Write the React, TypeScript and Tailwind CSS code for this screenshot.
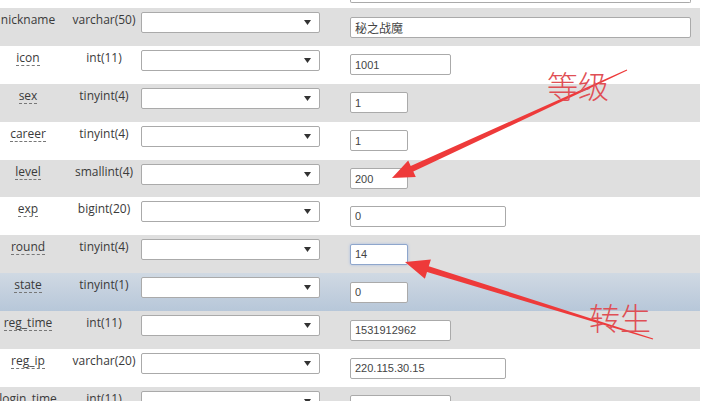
import React from 'react';

interface Field {
  name: string;
  type: string;
  value: string;
  width: string;
  bg: string;
  focused?: boolean;
  plain?: boolean;
}

const fields: Field[] = [
  { name: 'nickname', type: 'varchar(50)', value: '秘之战魔', width: 'w-[341px]', bg: 'bg-[#dfdfdf]', plain: true },
  { name: 'icon', type: 'int(11)', value: '1001', width: 'w-[101px]', bg: 'bg-white' },
  { name: 'sex', type: 'tinyint(4)', value: '1', width: 'w-[58px]', bg: 'bg-[#dfdfdf]' },
  { name: 'career', type: 'tinyint(4)', value: '1', width: 'w-[58px]', bg: 'bg-white' },
  { name: 'level', type: 'smallint(4)', value: '200', width: 'w-[58px]', bg: 'bg-[#dfdfdf]' },
  { name: 'exp', type: 'bigint(20)', value: '0', width: 'w-[156px]', bg: 'bg-white' },
  { name: 'round', type: 'tinyint(4)', value: '14', width: 'w-[58px]', bg: 'bg-[#dfdfdf]', focused: true },
  { name: 'state', type: 'tinyint(1)', value: '0', width: 'w-[58px]', bg: 'bg-gradient-to-b from-[#d0d9e3] to-[#b7c7d9]' },
  { name: 'reg_time', type: 'int(11)', value: '1531912962', width: 'w-[101px]', bg: 'bg-[#dfdfdf]' },
  { name: 'reg_ip', type: 'varchar(20)', value: '220.115.30.15', width: 'w-[156px]', bg: 'bg-white' },
  { name: 'login_time', type: 'int(11)', value: '1532060210', width: 'w-[101px]', bg: 'bg-[#dfdfdf]' },
];

const SelectBox = () => (
  <div className="mt-[4px] ml-[1px] w-[179px] h-[21px] bg-white border border-[#aaa] rounded-[2px] flex items-center justify-end pr-[8px]">
    <svg width="7" height="5" viewBox="0 0 7 5">
      <path d="M0 0 L7 0 L3.5 5 Z" fill="#333" />
    </svg>
  </div>
);

const FieldRow = ({ field }: { field: Field }) => (
  <div className={`flex items-start h-[37.9px] w-[700px] ${field.bg}`}>
    <div className="w-[56px] shrink-0 pt-[5px] flex justify-center whitespace-nowrap">
      <span
        className={`inline-block leading-[14px] text-[12px] text-[#3a3a3a] ${
          field.plain ? '' : 'border-b border-dashed border-[#777]'
        }`}
      >
        {field.name}
      </span>
    </div>
    <div className="w-[72px] ml-[12px] shrink-0 pt-[5px] text-center leading-[14px] text-[12px] text-[#3a3a3a] whitespace-nowrap">
      {field.type}
    </div>
    <SelectBox />
    <input
      readOnly
      defaultValue={field.value}
      className={`mt-[8.5px] ml-[30px] h-[21px] ${field.width} bg-white rounded-[2px] px-[4px] text-[11px] text-[#444] outline-none ${
        field.focused
          ? 'border border-[#8ea6cc] shadow-[0_0_3px_#a9bde0]'
          : 'border border-[#aaa]'
      } ${field.name === 'nickname' ? 'text-[12px]' : ''}`}
      style={{ fontFamily: '"Liberation Sans", "Noto Sans CJK SC", sans-serif' }}
    />
  </div>
);

const Annotations = () => (
  <>
    <svg className="absolute left-0 top-0 pointer-events-none" width="726" height="401" viewBox="0 0 726 401">
      <polygon
        points="392,178 415.8,177 413.3,171.6 627.2,70.6 626.8,69.4 410.7,166 408.2,160.6"
        fill="#ee3a3a"
      />
      <polygon
        points="405,262 424.9,278.7 427,272 652.8,339.6 653.2,338.4 428.8,266.2 430.9,259.6"
        fill="#ee3a3a"
      />
    </svg>
    <div
      className="absolute left-[547px] top-[69px] text-[31px] leading-none font-light text-[#df4f55]"
      style={{ fontFamily: '"Noto Sans CJK SC", sans-serif' }}
    >
      等级
    </div>
    <div
      className="absolute left-[589px] top-[301px] text-[31px] leading-none font-light text-[#df4f55]"
      style={{ fontFamily: '"Noto Sans CJK SC", sans-serif' }}
    >
      转生
    </div>
  </>
);

export default function App() {
  return (
    <div
      className="relative w-[726px] h-[401px] overflow-hidden bg-white"
      style={{ fontFamily: '"Open Sans", "Noto Sans CJK SC", sans-serif' }}
    >
      {/* row above, cut off by the screenshot */}
      <div className="h-[8px] w-[700px] bg-white">
        <div className="ml-[350px] w-[341px] h-[3px] border border-t-0 border-[#aaa] rounded-b-[2px]" />
      </div>
      {fields.map((f) => (
        <FieldRow key={f.name} field={f} />
      ))}
      <Annotations />
    </div>
  );
}
